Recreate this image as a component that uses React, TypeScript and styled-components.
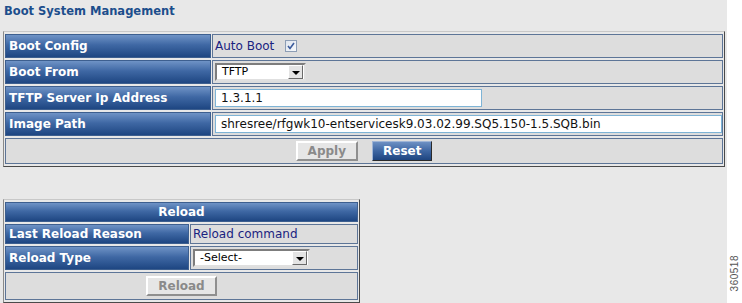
import React from 'react';
import styled, { createGlobalStyle, css } from 'styled-components';

const GlobalStyle = createGlobalStyle`
  html, body {
    margin: 0;
    padding: 0;
    background: #ffffff;
  }
  body {
    font-family: "DejaVu Sans", Verdana, sans-serif;
  }
`;

const Page = styled.div`
  display: flex;
  width: 742px;
  height: 303px;
  overflow: hidden;
`;

const Panel = styled.div`
  width: 727px;
  height: 303px;
  box-sizing: border-box;
  background: #e8e8e8;
  padding: 4px 0 0 3px;
`;

const Side = styled.div`
  flex: 1;
  display: flex;
  align-items: flex-end;
  justify-content: center;
  padding-bottom: 12px;
`;

const FigureId = styled.span`
  writing-mode: vertical-rl;
  transform: rotate(180deg);
  font-family: "Liberation Sans", Arial, sans-serif;
  font-size: 10px;
  color: #555;
  letter-spacing: 0.5px;
`;

const Title = styled.h1`
  margin: 0 0 12px 1px;
  font-size: 11.5px;
  font-weight: bold;
  color: #1c4e8c;
  height: 15px;
  line-height: 15px;
`;

const FormTable = styled.table<{ $width: number }>`
  width: ${(p) => p.$width}px;
  border-collapse: separate;
  border-spacing: 1px 2px;
  border: 1px solid #4a4a4a;
  border-top-color: #c8c8c8;
  border-left-color: #8a8a8a;
  font-size: 12px;
`;

const LabelCell = styled.td<{ $width?: number; $h?: number }>`
  ${(p) => p.$width && css`width: ${p.$width}px;`}
  height: ${(p) => p.$h ?? 22}px;
  padding: 0 0 0 3px;
  border: 1px solid #3d5f8f;
  background: linear-gradient(to bottom, #6f93c6 0%, #3f68a4 45%, #1e4682 100%);
  color: #ffffff;
  font-weight: bold;
  white-space: nowrap;
  line-height: 14px;
`;

const HeadCell = styled(LabelCell)`
  text-align: center;
  padding: 0;
`;

const ValueCell = styled.td<{ $center?: boolean; $h?: number }>`
  height: ${(p) => p.$h ?? 22}px;
  padding: 0 0 0 2px;
  border: 1px solid #5d7597;
  background: #dddddd;
  color: #1a2380;
  white-space: nowrap;
  line-height: 14px;
  ${(p) => p.$center && css`text-align: center; padding: 0;`}
`;

const Inline = styled.span`
  display: inline-flex;
  align-items: center;
  gap: 11px;
`;

const CheckBox = styled.span`
  display: inline-flex;
  align-items: center;
  justify-content: center;
  width: 10px;
  height: 10px;
  border: 1px solid #8c9db5;
  background: linear-gradient(to bottom right, #dfe5ee, #f7f9fb);
`;

const Select = styled.div<{ $width: number }>`
  display: flex;
  align-items: center;
  width: ${(p) => p.$width}px;
  height: 18px;
  box-sizing: border-box;
  background: #ffffff;
  border: 2px solid;
  border-color: #7d7d7d #e0e0e0 #e0e0e0 #7d7d7d;
  font-size: 11px;
  color: #000;
`;

const SelectText = styled.span`
  flex: 1;
  padding-left: 5px;
`;

const SelectArrow = styled.span`
  display: flex;
  align-items: center;
  justify-content: center;
  width: 15px;
  height: 14px;
  box-sizing: border-box;
  background: #e4e4e4;
  border: 1px solid;
  border-color: #ffffff #6a6a6a #6a6a6a #ffffff;
  margin-right: 1px;

  &::after {
    content: '';
    border-left: 4px solid transparent;
    border-right: 4px solid transparent;
    border-top: 4px solid #000;
    margin-top: 2px;
  }
`;

const TextInput = styled.input<{ $width: number }>`
  width: ${(p) => p.$width}px;
  height: 18px;
  box-sizing: border-box;
  margin: 0;
  padding: 0 5px;
  border: 1px solid #7eb4d6;
  background: #ffffff;
  font-family: "DejaVu Sans", Verdana, sans-serif;
  font-size: 12px;
  color: #111;
  outline: none;
`;

const Button = styled.button<{ $primary?: boolean }>`
  height: 20px;
  margin: 0 7px;
  padding: 0 10px;
  font-family: "DejaVu Sans", Verdana, sans-serif;
  font-size: 12px;
  font-weight: bold;
  vertical-align: middle;
  ${(p) =>
    p.$primary
      ? css`
          color: #ffffff;
          background: linear-gradient(to bottom, #6d90c3 0%, #3e66a2 50%, #1e4580 100%);
          border: 1px solid;
          border-color: #9fb5d6 #2a2a2a #2a2a2a #9fb5d6;
        `
      : css`
          color: #8a8a8a;
          background: #e6e6e6;
          border: 2px solid;
          border-color: #ffffff #8f8f8f #8f8f8f #ffffff;
        `}
`;

const Spacer = styled.div`
  height: 32px;
`;

const Check = () => (
  <svg width="8" height="8" viewBox="0 0 8 8">
    <path d="M1 4 L3 6.5 L7 1" fill="none" stroke="#3b5b9c" strokeWidth="1.6" />
  </svg>
);

const App: React.FC = () => {
  return (
    <>
      <GlobalStyle />
      <Page>
        <Panel>
          <Title>Boot System Management</Title>
          <FormTable $width={722}>
            <tbody>
              <tr>
                <LabelCell $width={203}>Boot Config</LabelCell>
                <ValueCell>
                  <Inline>
                    Auto Boot
                    <CheckBox>
                      <Check />
                    </CheckBox>
                  </Inline>
                </ValueCell>
              </tr>
              <tr>
                <LabelCell>Boot From</LabelCell>
                <ValueCell>
                  <Select $width={91}>
                    <SelectText>TFTP</SelectText>
                    <SelectArrow />
                  </Select>
                </ValueCell>
              </tr>
              <tr>
                <LabelCell>TFTP Server Ip Address</LabelCell>
                <ValueCell>
                  <TextInput $width={267} defaultValue="1.3.1.1" />
                </ValueCell>
              </tr>
              <tr>
                <LabelCell>Image Path</LabelCell>
                <ValueCell>
                  <TextInput $width={507} defaultValue="shresree/rfgwk10-entservicesk9.03.02.99.SQ5.150-1.5.SQB.bin" />
                </ValueCell>
              </tr>
              <tr>
                <ValueCell colSpan={2} $center $h={24}>
                  <Button disabled>Apply</Button>
                  <Button $primary>Reset</Button>
                </ValueCell>
              </tr>
            </tbody>
          </FormTable>
          <Spacer />
          <FormTable $width={357}>
            <tbody>
              <tr>
                <HeadCell colSpan={2} $h={18}>Reload</HeadCell>
              </tr>
              <tr>
                <LabelCell $width={179} $h={18}>Last Reload Reason</LabelCell>
                <ValueCell $h={18}>Reload command</ValueCell>
              </tr>
              <tr>
                <LabelCell>Reload Type</LabelCell>
                <ValueCell>
                  <Select $width={117}>
                    <SelectText>-Select-</SelectText>
                    <SelectArrow />
                  </Select>
                </ValueCell>
              </tr>
              <tr>
                <ValueCell colSpan={2} $center $h={26}>
                  <Button disabled>Reload</Button>
                </ValueCell>
              </tr>
            </tbody>
          </FormTable>
        </Panel>
        <Side>
          <FigureId>360518</FigureId>
        </Side>
      </Page>
    </>
  );
};

export default App;
